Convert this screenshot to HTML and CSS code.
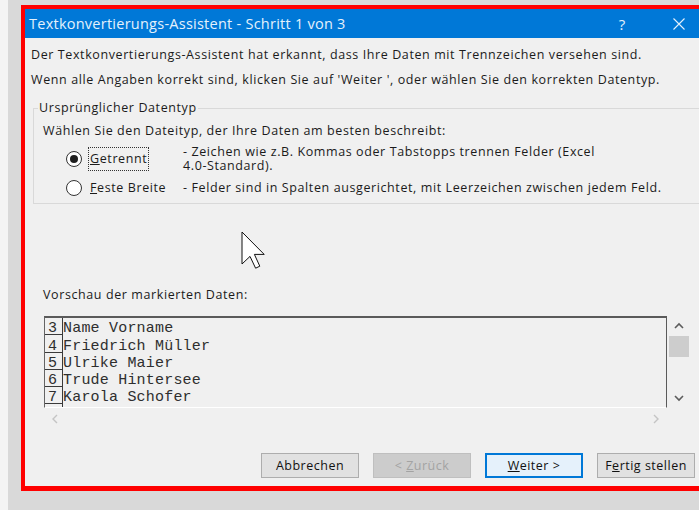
FILE: index.html
```html
<!DOCTYPE html>
<html lang="de">
<head>
<meta charset="utf-8">
<title>Textkonvertierungs-Assistent</title>
<link rel="stylesheet" href="styles.css">
</head>
<body>
<div class="desk">
  <div class="dialog">
    <div class="titlebar">
      <span class="title">Textkonvertierungs-Assistent - Schritt 1 von 3</span>
      <span class="tb-btn tb-help">?</span>
      <span class="tb-btn tb-close">
        <svg width="12" height="12" viewBox="0 0 12 12"><path d="M0.5 0.5 L11.5 11.5 M11.5 0.5 L0.5 11.5" stroke="currentColor" stroke-width="1.1" fill="none"/></svg>
      </span>
    </div>
    <div class="content">
      <p class="intro">Der Textkonvertierungs-Assistent hat erkannt, dass Ihre Daten mit Trennzeichen versehen sind.</p>
      <p class="intro">Wenn alle Angaben korrekt sind, klicken Sie auf 'Weiter ', oder wählen Sie den korrekten Datentyp.</p>

      <fieldset class="group">
        <legend>Ursprünglicher Datentyp</legend>
        <div class="prompt">Wählen Sie den Dateityp, der Ihre Daten am besten beschreibt:</div>
        <div class="options">
          <span class="radio checked"></span>
          <span class="opt-label focused"><u>G</u>etrennt</span>
          <span class="opt-desc">- Zeichen wie z.B. Kommas oder Tabstopps trennen Felder (Excel<br>4.0-Standard).</span>

          <span class="radio"></span>
          <span class="opt-label"><u>F</u>este Breite</span>
          <span class="opt-desc single">- Felder sind in Spalten ausgerichtet, mit Leerzeichen zwischen jedem Feld.</span>
        </div>
      </fieldset>

      <div class="gap">
        <svg class="cursor" width="24" height="38" viewBox="0 0 12 19">
          <path d="M0.5 0.5 L0.5 16.5 L4.5 12.7 L7.3 18.6 L9.4 17.6 L6.7 11.7 L11.6 11.7 Z" fill="#fff" stroke="#111" stroke-width="1" vector-effect="non-scaling-stroke" stroke-linejoin="miter"/>
        </svg>
      </div>

      <div class="preview-label">Vorschau der markierten Daten:</div>

      <div class="preview">
        <div class="data">
          <div class="row"><span class="num">3</span><span class="cell">Name Vorname</span></div>
          <div class="row"><span class="num">4</span><span class="cell">Friedrich Müller</span></div>
          <div class="row"><span class="num">5</span><span class="cell">Ulrike Maier</span></div>
          <div class="row"><span class="num">6</span><span class="cell">Trude Hintersee</span></div>
          <div class="row"><span class="num">7</span><span class="cell">Karola Schofer</span></div>
          <div class="row"><span class="num"></span><span class="cell"></span></div>
        </div>
        <div class="vscroll">
          <span class="arrow">
            <svg width="10" height="7" viewBox="0 0 10 7"><path d="M1 6 L5 2 L9 6" stroke="#5c5c5c" stroke-width="1.6" fill="none"/></svg>
          </span>
          <span class="thumb"></span>
          <span class="track"></span>
          <span class="arrow">
            <svg width="10" height="7" viewBox="0 0 10 7"><path d="M1 1 L5 5 L9 1" stroke="#5c5c5c" stroke-width="1.6" fill="none"/></svg>
          </span>
        </div>
        <div class="hscroll">
          <svg width="7" height="10" viewBox="0 0 7 10"><path d="M6 1 L2 5 L6 9" stroke="#c4c4c4" stroke-width="1.4" fill="none"/></svg>
          <svg width="7" height="10" viewBox="0 0 7 10"><path d="M1 1 L5 5 L1 9" stroke="#c4c4c4" stroke-width="1.4" fill="none"/></svg>
        </div>
      </div>

      <div class="buttons">
        <button class="btn" type="button">Abbrechen</button>
        <button class="btn disabled" type="button">&lt; <u>Z</u>urück</button>
        <button class="btn default" type="button"><u>W</u>eiter &gt;</button>
        <button class="btn" type="button">F<u>e</u>rtig stellen</button>
      </div>
    </div>
  </div>
</div>
</body>
</html>
```

FILE: styles.css
```css
* {
  box-sizing: border-box;
}

html,
body {
  margin: 0;
  height: 100%;
}

body {
  background: #d9d9d9;
  overflow: hidden;
  font-family: "Open Sans", "Noto Sans", sans-serif;
  font-size: 12.5px;
  letter-spacing: 0.6px;
  color: #1b1b1b;
}

/* desktop strip behind the dialog */
.desk {
  height: 510px;
  border-left: 8px solid #f4f4f4;
  padding: 5px 0 0 13px;
}

.dialog {
  width: 685px;
  border: 4px solid #ff0000;
  border-bottom-width: 5px;
  background: #f0f0f0;
}

/* ---- title bar ---- */
.titlebar {
  height: 29px;
  background: #0078d7;
  color: #e4f1fc;
  display: flex;
  align-items: center;
  padding-left: 4px;
  font-size: 14.5px;
  letter-spacing: 0.25px;
}

.title {
  flex: 1;
  white-space: nowrap;
}

.tb-btn {
  display: flex;
  align-items: center;
  justify-content: center;
  height: 29px;
}

.tb-help {
  width: 34px;
  margin-right: 17px;
  font-size: 15px;
}

.tb-close {
  width: 46px;
}

/* ---- content ---- */
.content {
  padding-top: 5px;
}

.intro {
  margin: 0;
  padding-left: 6px;
  line-height: 24.5px;
  white-space: nowrap;
}

.group {
  margin: 8px 2px 0 8px;
  padding: 0 0 3px 0;
  border: 1px solid #d9d9d9;
  min-width: 0;
}

.group legend {
  margin-left: 4px;
  padding: 0 1px;
  line-height: 16px;
}

.prompt {
  margin-top: 7px;
  padding-left: 9px;
  line-height: 16px;
  white-space: nowrap;
}

.options {
  margin-top: 6px;
  padding-left: 32px;
  display: grid;
  grid-template-columns: 16px 101px 1fr;
  align-items: center;
  row-gap: 3.6px;
}

.radio {
  width: 16px;
  height: 16px;
  border-radius: 50%;
  border: 1px solid #333;
  background: #fff;
  display: flex;
  align-items: center;
  justify-content: center;
}

.radio.checked::after {
  content: "";
  width: 8px;
  height: 8px;
  border-radius: 50%;
  background: #1e1e1e;
}

.opt-label {
  justify-self: start;
  margin-left: 6px;
  padding: 0 1px 0 1px;
  line-height: 22px;
  border: 1px dotted transparent;
  white-space: nowrap;
}

.opt-label.focused {
  border-color: #333;
}

.opt-desc {
  line-height: 13.7px;
  white-space: nowrap;
}

.opt-desc.single {
  line-height: 16px;
}

/* ---- empty area with the mouse pointer ---- */
.gap {
  position: relative;
  height: 83px;
}

.cursor {
  position: absolute;
  left: 216px;
  top: 27px;
}

.preview-label {
  padding-left: 18px;
  line-height: 16px;
}

/* ---- data preview ---- */
.preview {
  margin: 13px 0 0 19px;
  display: grid;
  grid-template-columns: 623px 23px;
  grid-template-rows: 92px 18px;
}

.data {
  border-top: 2px solid #5a5a5a;
  border-left: 1px solid #646464;
  border-right: 1px solid #5a5a5a;
  border-bottom: 1px solid #ffffff;
  overflow: hidden;
  font-family: "Liberation Mono", "DejaVu Sans Mono", monospace;
  font-size: 15px;
  letter-spacing: 0.2px;
  color: #2e2e2e;
}

.row {
  display: flex;
  height: 17.25px;
}

.num,
.cell {
  padding-top: 4.25px;
  line-height: 13px;
}

.num {
  width: 18px;
  flex: none;
  padding-left: 3px;
  border-right: 1px solid #3a3a3a;
  border-bottom: 1px solid #3a3a3a;
}

.cell {
  white-space: pre;
}

.vscroll {
  display: flex;
  flex-direction: column;
  align-items: center;
  padding-left: 1px;
}

.vscroll .arrow {
  height: 19px;
  display: flex;
  align-items: center;
  justify-content: center;
}

.vscroll .thumb {
  width: 20px;
  height: 21px;
  margin-top: 1px;
  background: #cdcdcd;
}

.vscroll .track {
  flex: 1;
}

.hscroll {
  display: flex;
  align-items: center;
  justify-content: space-between;
  padding: 4px 7px 0 7px;
}

/* ---- button row ---- */
.buttons {
  margin-top: 27px;
  padding: 0 7px 8px 0;
  display: flex;
  justify-content: flex-end;
  gap: 14px;
}

.btn {
  width: 98px;
  height: 25px;
  padding: 0;
  font-family: "Open Sans", "Noto Sans", sans-serif;
  font-size: 12.5px;
  letter-spacing: 0.5px;
  color: #111;
  background: #e1e1e1;
  border: 1px solid #adadad;
  border-radius: 0;
}

.btn.disabled {
  background: #cccccc;
  border-color: #bfbfbf;
  color: #a3a3a3;
}

.btn.default {
  background: #e5f1fb;
  border: 2px solid #0078d7;
}
```
